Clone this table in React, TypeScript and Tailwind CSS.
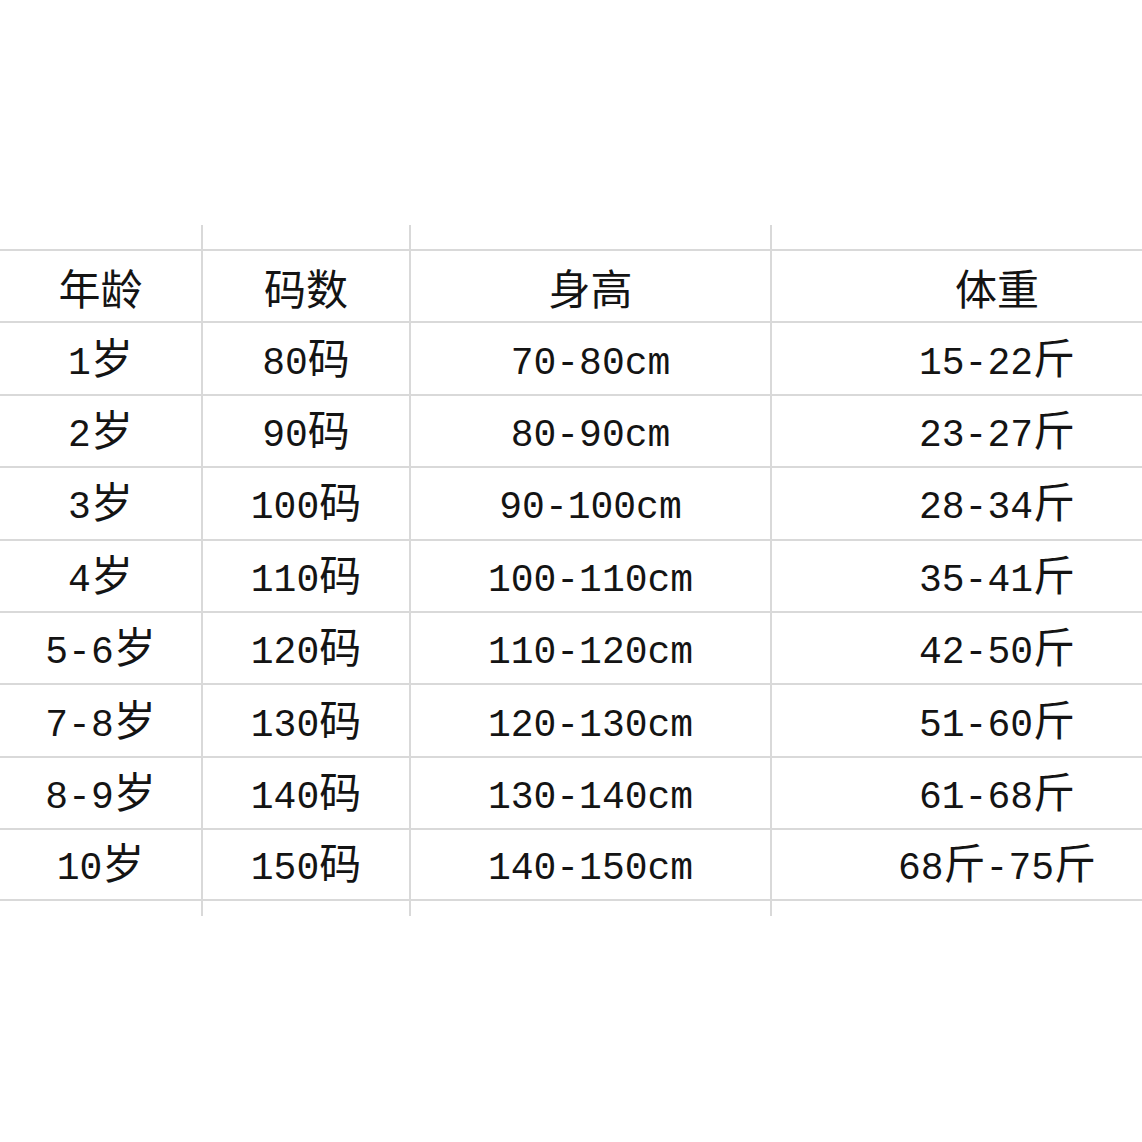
import * as React from "react";

const header = ["年龄", "码数", "身高", "体重"];

const rows: string[][] = [
  ["1岁", "80码", "70-80cm", "15-22斤"],
  ["2岁", "90码", "80-90cm", "23-27斤"],
  ["3岁", "100码", "90-100cm", "28-34斤"],
  ["4岁", "110码", "100-110cm", "35-41斤"],
  ["5-6岁", "120码", "110-120cm", "42-50斤"],
  ["7-8岁", "130码", "120-130cm", "51-60斤"],
  ["8-9岁", "140码", "130-140cm", "61-68斤"],
  ["10岁", "150码", "140-150cm", "68斤-75斤"],
];

const colClass = [
  "w-[201px]",
  "w-[208px] border-l-2 border-[#d9d9d9]",
  "w-[361px] border-l-2 border-[#d9d9d9]",
  "w-[452px] border-l-2 border-[#d9d9d9]",
];

// CJK characters are set a little larger than the latin digits, like the bitmap font in the picture
const Mixed: React.FC<{ text: string }> = ({ text }) => {
  const parts = text.match(/[\u4e00-\u9fff]+|[^\u4e00-\u9fff]+/g) || [];
  return (
    <span className="whitespace-nowrap text-[42px] leading-[48px] font-['Noto_Sans_CJK_SC',sans-serif]">
      {parts.map((p, i) =>
        /[\u4e00-\u9fff]/.test(p) ? (
          <span key={i}>{p}</span>
        ) : (
          <span key={i} className="text-[38px] font-['Liberation_Mono',monospace]">
            {p}
          </span>
        )
      )}
    </span>
  );
};

function Row({ cells, last }: { cells: string[]; last?: boolean }) {
  return (
    <div
      className={`flex h-[72.4px] border-t-2 border-[#d9d9d9] ${last ? "border-b-2" : ""}`}
    >
      {cells.map((c, i) => (
        <div
          key={i}
          className={`${colClass[i]} flex shrink-0 items-center justify-center pt-[2px] text-[#141414]`}
        >
          <Mixed text={c} />
        </div>
      ))}
    </div>
  );
}

function Spacer({ h }: { h: string }) {
  return (
    <div className={`flex ${h}`}>
      {colClass.map((c, i) => (
        <div key={i} className={`${c} shrink-0`} />
      ))}
    </div>
  );
}

export default function App() {
  return (
    <div className="w-[1142px] h-[1142px] overflow-hidden bg-white">
      <div className="pt-[225px] w-[1222px]">
        <Spacer h="h-[24px]" />
        <Row cells={header} />
        {rows.map((r, i) => (
          <Row key={i} cells={r} last={i === rows.length - 1} />
        ))}
        <Spacer h="h-[15px]" />
      </div>
    </div>
  );
}
